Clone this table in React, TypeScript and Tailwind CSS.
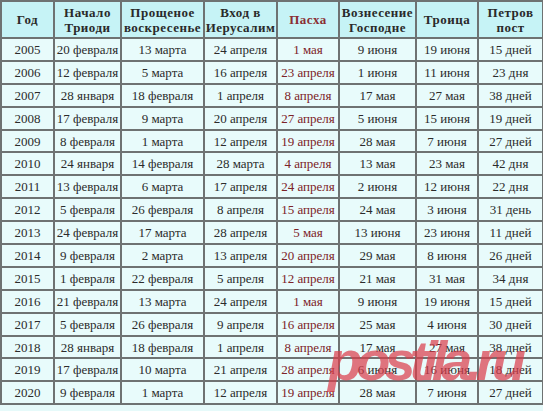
const HEAD = [
  ["Год"],
  ["Начало", "Триоди"],
  ["Прощеное", "воскресенье"],
  ["Вход в", "Иерусалим"],
  ["Пасха"],
  ["Вознесение", "Господне"],
  ["Троица"],
  ["Петров", "пост"],
];

const WIDTHS = ["w-[53px]", "w-[67px]", "w-[83px]", "w-[73px]", "w-[62px]", "w-[77px]", "w-[62px]", "w-[65px]"];

const ROWS = [
  ["2005", "20 февраля", "13 марта", "24 апреля", "1 мая", "9 июня", "19 июня", "15 дней"],
  ["2006", "12 февраля", "5 марта", "16 апреля", "23 апреля", "1 июня", "11 июня", "23 дня"],
  ["2007", "28 января", "18 февраля", "1 апреля", "8 апреля", "17 мая", "27 мая", "38 дней"],
  ["2008", "17 февраля", "9 марта", "20 апреля", "27 апреля", "5 июня", "15 июня", "19 дней"],
  ["2009", "8 февраля", "1 марта", "12 апреля", "19 апреля", "28 мая", "7 июня", "27 дней"],
  ["2010", "24 января", "14 февраля", "28 марта", "4 апреля", "13 мая", "23 мая", "42 дня"],
  ["2011", "13 февраля", "6 марта", "17 апреля", "24 апреля", "2 июня", "12 июня", "22 дня"],
  ["2012", "5 февраля", "26 февраля", "8 апреля", "15 апреля", "24 мая", "3 июня", "31 день"],
  ["2013", "24 февраля", "17 марта", "28 апреля", "5 мая", "13 июня", "23 июня", "11 дней"],
  ["2014", "9 февраля", "2 марта", "13 апреля", "20 апреля", "29 мая", "8 июня", "26 дней"],
  ["2015", "1 февраля", "22 февраля", "5 апреля", "12 апреля", "21 мая", "31 мая", "34 дня"],
  ["2016", "21 февраля", "13 марта", "24 апреля", "1 мая", "9 июня", "19 июня", "15 дней"],
  ["2017", "5 февраля", "26 февраля", "9 апреля", "16 апреля", "25 мая", "4 июня", "30 дней"],
  ["2018", "28 января", "18 февраля", "1 апреля", "8 апреля", "17 мая", "27 мая", "38 дней"],
  ["2019", "17 февраля", "10 марта", "21 апреля", "28 апреля", "6 июня", "16 июня", "18 дней"],
  ["2020", "9 февраля", "1 марта", "12 апреля", "19 апреля", "28 мая", "7 июня", "27 дней"],
];

export default function App() {
  return (
    <div className="relative h-[411px] w-[543px] overflow-hidden bg-[#e6fafa] [font-family:'Liberation_Serif',serif]">
      <table className="w-[542px] table-fixed border-collapse border-2 border-[#6e7272] [font-family:'Liberation_Serif',serif]">
        <thead>
          <tr className="h-[37px] bg-[#c6f3f6]">
            {HEAD.map((h, i) => (
              <th
                key={i}
                className={`${WIDTHS[i]} border-2 border-[#6e7272] p-0 text-center align-middle text-[13px] font-bold leading-[15px] tracking-[0.5px] ${
                  i === 4 ? "text-[#8a2e33]" : "text-[#2a2a2a]"
                }`}
              >
                {h.map((line) => (
                  <div key={line} className="whitespace-nowrap">
                    {line}
                  </div>
                ))}
              </th>
            ))}
          </tr>
        </thead>
        <tbody>
          {ROWS.map((r) => (
            <tr key={r[0]} className="h-[22.9px] bg-[#e8fbfb]">
              {r.map((c, i) => (
                <td
                  key={i}
                  className={`border-2 border-[#6e7272] p-0 text-center align-middle text-[13px] leading-[15px] whitespace-nowrap ${
                    i === 4 ? "text-[#7c2328]" : "text-[#2b2b2b]"
                  }`}
                >
                  {c}
                </td>
              ))}
            </tr>
          ))}
        </tbody>
      </table>

      {/* watermark over the lower right corner */}
      <div className="pointer-events-none absolute left-[328px] top-[333px] text-[56px] font-bold italic leading-none tracking-[-6px] text-[#dc3c4a] opacity-70 [font-family:'Liberation_Sans',sans-serif]">
        postila.ru
      </div>
    </div>
  );
}
